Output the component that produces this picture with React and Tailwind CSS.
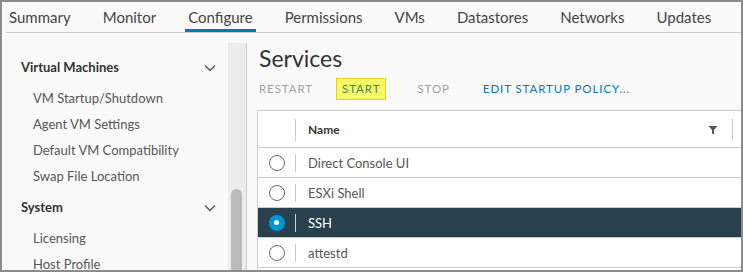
const TABS = ['Summary', 'Monitor', 'Configure', 'Permissions', 'VMs', 'Datastores', 'Networks', 'Updates']

const SECTIONS = [
  { title: 'Virtual Machines', items: ['VM Startup/Shutdown', 'Agent VM Settings', 'Default VM Compatibility', 'Swap File Location'] },
  { title: 'System', items: ['Licensing', 'Host Profile'] },
]

const ROWS = [
  { name: 'Direct Console UI' },
  { name: 'ESXi Shell' },
  { name: 'SSH', selected: true },
  { name: 'attestd' },
]

function Chevron() {
  return (
    <svg width="12" height="8" viewBox="0 0 12 8" className="text-[#565656]">
      <path d="M1 1.5 L6 6.5 L11 1.5" fill="none" stroke="currentColor" strokeWidth="1.4" />
    </svg>
  )
}

function Radio({ checked }) {
  if (checked) {
    return (
      <span className="w-[16px] h-[16px] rounded-full bg-[#0095d3] flex items-center justify-center">
        <span className="w-[5px] h-[5px] rounded-full bg-white" />
      </span>
    )
  }
  return <span className="w-[16px] h-[16px] rounded-full border border-[#6b6b6b] bg-white" />
}

export default function App() {
  return (
    <div className="w-[743px] h-[272px] border-2 border-[#8c8c8c] bg-[#fafafa] flex flex-col overflow-hidden"
      style={{ fontFamily: 'Lato, "Open Sans", sans-serif' }}>
      {/* tabs */}
      <div className="ml-[4px] h-[31px] flex gap-[26px] border-b border-[#cccccc] shrink-0">
        {TABS.map((t) => (
          <div key={t}
            className={
              'h-full flex items-center px-[3px] text-[15px] text-[#444] ' +
              (t === 'Configure' ? 'border-b-[3px] border-[#0079b8] pt-[3px] text-[#222]' : '')
            }>
            {t}
          </div>
        ))}
      </div>

      <div className="flex flex-1 min-h-0">
        {/* sidebar */}
        <div className="w-[226px] shrink-0 pl-[19px] pr-[12px] pt-[22px]">
          {SECTIONS.map((s) => (
            <div key={s.title}>
              <div className="h-[26px] flex items-center justify-between text-[13px] font-bold text-[#333]">
                <span>{s.title}</span>
                <Chevron />
              </div>
              <div className="pt-[5px] pb-[5px]">
                {s.items.map((it) => (
                  <div key={it} className="h-[26px] flex items-center pl-[12px] text-[13px] text-[#565656]">{it}</div>
                ))}
              </div>
            </div>
          ))}
        </div>

        {/* scrollbar */}
        <div className="w-[19px] shrink-0 mt-[10px] bg-[#ececec] border-r border-[#cccccc] relative">
          <div className="absolute left-[3px] top-[146px] w-[11px] h-[120px] rounded-full bg-[#bababa]" />
        </div>

        {/* main */}
        <div className="flex-1 min-w-0 pl-[10px] flex flex-col">
          <div className="pl-[2px] pt-[10px] text-[23px] leading-[30px] text-[#333]">Services</div>
          <div className="flex items-center h-[30px] mt-[1px] text-[11.5px] tracking-[0.08em] uppercase">
            <span className="text-[#a0a0a0] pl-[2px]">Restart</span>
            <span className="ml-[23px] px-[5px] h-[22px] flex items-center bg-[#f7f76a] border border-[#e8cf1a] text-[#3d8750]">Start</span>
            <span className="ml-[31px] text-[#a0a0a0]">Stop</span>
            <span className="ml-[33px] text-[#0079b8]">Edit startup policy...</span>
          </div>
          <div className="mt-[6px] bg-white border-t border-l border-[#cccccc] flex-1">
            <div className="h-[37px] flex items-center border-b border-[#cccccc] pt-[2px]">
              <div className="w-[38px] h-[22px] border-r border-[#cccccc]" />
              <div className="flex-1 pl-[12px] text-[12px] font-bold text-[#333]">Name</div>
              <svg width="10" height="10" viewBox="0 0 10 10" className="mr-[14px]">
                <path d="M0.5 1 H9.5 L6 5 V9.5 L4 8.5 V5 Z" fill="#555" />
              </svg>
              <div className="w-px h-[22px] bg-[#cccccc] mr-[8px]" />
            </div>
            {ROWS.map((r) => (
              <div key={r.name}
                className={'h-[30px] flex items-center border-b border-[#cccccc] ' + (r.selected ? 'bg-[#29414e]' : '')}>
                <div className="w-[38px] h-[18px] flex items-center justify-center border-r border-[#cccccc]">
                  <Radio checked={r.selected} />
                </div>
                <div className={'pl-[12px] pt-[2px] text-[13px] ' + (r.selected ? 'text-white' : 'text-[#565656]')}>{r.name}</div>
              </div>
            ))}
          </div>
        </div>
      </div>
    </div>
  )
}
